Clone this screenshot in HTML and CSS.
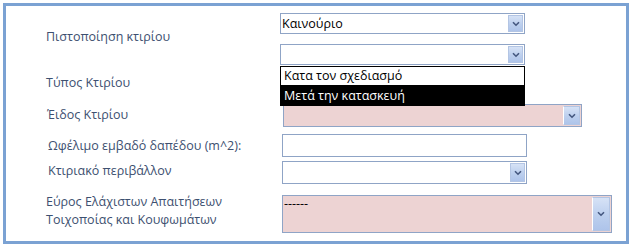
FILE: index.html
```html
<!DOCTYPE html>
<html lang="el">
<head>
<meta charset="utf-8">
<title>Κτίριο</title>
<link rel="stylesheet" href="styles.css">
</head>
<body>
<div class="frame">
  <div class="labels">
    <div class="label l1">Πιστοποίηση κτιρίου</div>
    <div class="label l2">Τύπος Κτιρίου</div>
    <div class="label l3">Έιδος Κτιρίου</div>
    <div class="label l4">Ωφέλιμο εμβαδό δαπέδου (m^2):</div>
    <div class="label l5">Κτιριακό περιβάλλον</div>
    <div class="label l6">Εύρος Ελάχιστων Απαιτήσεων<br>Τοιχοποίας και Κουφωμάτων</div>
  </div>
  <div class="controls">
    <div class="combo c1"><span class="value">Καινούριο</span><span class="btn"><svg viewBox="0 0 8 6" width="8" height="6"><path d="M1 1.2 L4 4.2 L7 1.2" fill="none" stroke="#44577f" stroke-width="1.6"/></svg></span></div>
    <div class="combo c2"><span class="value"></span><span class="btn"><svg viewBox="0 0 8 6" width="8" height="6"><path d="M1 1.2 L4 4.2 L7 1.2" fill="none" stroke="#44577f" stroke-width="1.6"/></svg></span></div>
    <div class="combo c3 pink"><span class="value"></span><span class="btn"><svg viewBox="0 0 8 6" width="8" height="6"><path d="M1 1.2 L4 4.2 L7 1.2" fill="none" stroke="#44577f" stroke-width="1.6"/></svg></span></div>
    <div class="textbox c4"></div>
    <div class="combo c5"><span class="value"></span><span class="btn"><svg viewBox="0 0 8 6" width="8" height="6"><path d="M1 1.2 L4 4.2 L7 1.2" fill="none" stroke="#44577f" stroke-width="1.6"/></svg></span></div>
    <div class="combo c6 pink"><span class="value top">------</span><span class="btn"><svg viewBox="0 0 8 6" width="8" height="6"><path d="M1 1.2 L4 4.2 L7 1.2" fill="none" stroke="#44577f" stroke-width="1.6"/></svg></span></div>
  </div>
  <ul class="list">
    <li class="item">Κατα τον σχεδιασμό</li>
    <li class="item selected">Μετά την κατασκευή</li>
  </ul>
</div>
</body>
</html>
```

FILE: styles.css
```css
html, body {
  margin: 0;
  padding: 0;
  background: #ffffff;
}
body {
  padding: 3px;
  font-family: "Open Sans", "Noto Sans", "DejaVu Sans", sans-serif;
  font-size: 12.5px;
}
.frame {
  position: relative;
  width: 620px;
  height: 235px;
  border: 3px solid #7ba2d3;
  display: flex;
  background: #ffffff;
}
.labels {
  display: flex;
  flex-direction: column;
  width: 234px;
  padding-left: 40px;
  color: #3d5070;
}
.label {
  line-height: 18px;
  white-space: nowrap;
}
.l1 { margin-top: 22px; }
.l2 { margin-top: 28px; }
.l3 { margin-top: 14px; padding-left: 1px; }
.l4 { margin-top: 13px; padding-left: 2px; }
.l5 { margin-top: 7px; padding-left: 2px; }
.l6 { margin-top: 13px; }

.controls {
  display: flex;
  flex-direction: column;
  align-items: flex-start;
}
.combo, .textbox {
  box-sizing: border-box;
  border: 1px solid #8fa4c6;
  background: #ffffff;
  display: flex;
}
.combo .value {
  flex: 1;
  padding-left: 1px;
  line-height: 19px;
  color: #000000;
  overflow: hidden;
  white-space: nowrap;
}
.combo .value.top {
  line-height: 16px;
  align-self: flex-start;
}
.btn {
  box-sizing: border-box;
  width: 15px;
  margin: 1px;
  background: linear-gradient(to bottom, #d6e2f6 0%, #bccfee 55%, #aec4ea 100%);
  border: 1px solid #b3c5e4;
  display: flex;
  align-items: center;
  justify-content: center;
}
.pink {
  background: #edd3d3;
}
.pink .btn {
  border-left: 1px solid #ffffff;
}
.c1 { margin-top: 7px; width: 245px; height: 21px; }
.c2 { margin-top: 10px; width: 245px; height: 21px; }
.c3 { margin-top: 39px; margin-left: 3px; width: 299px; height: 23px; }
.c3 .btn { width: 17px; }
.c4 { margin-top: 7px; margin-left: 2px; width: 245px; height: 23px; }
.c5 { margin-top: 4px; margin-left: 2px; width: 245px; height: 23px; }
.c6 { margin-top: 11px; margin-left: 2px; width: 330px; height: 38px; }
.c6 .btn { width: 18px; }

.list {
  position: absolute;
  left: 274px;
  top: 60px;
  width: 245px;
  margin: 0;
  padding: 0;
  list-style: none;
}
.item {
  box-sizing: border-box;
  height: 20px;
  line-height: 18px;
  padding-left: 3px;
  color: #000000;
  background: #ffffff;
  border: 1px solid #000000;
  white-space: nowrap;
}
.item.selected {
  background: #000000;
  color: #ffffff;
}
```
